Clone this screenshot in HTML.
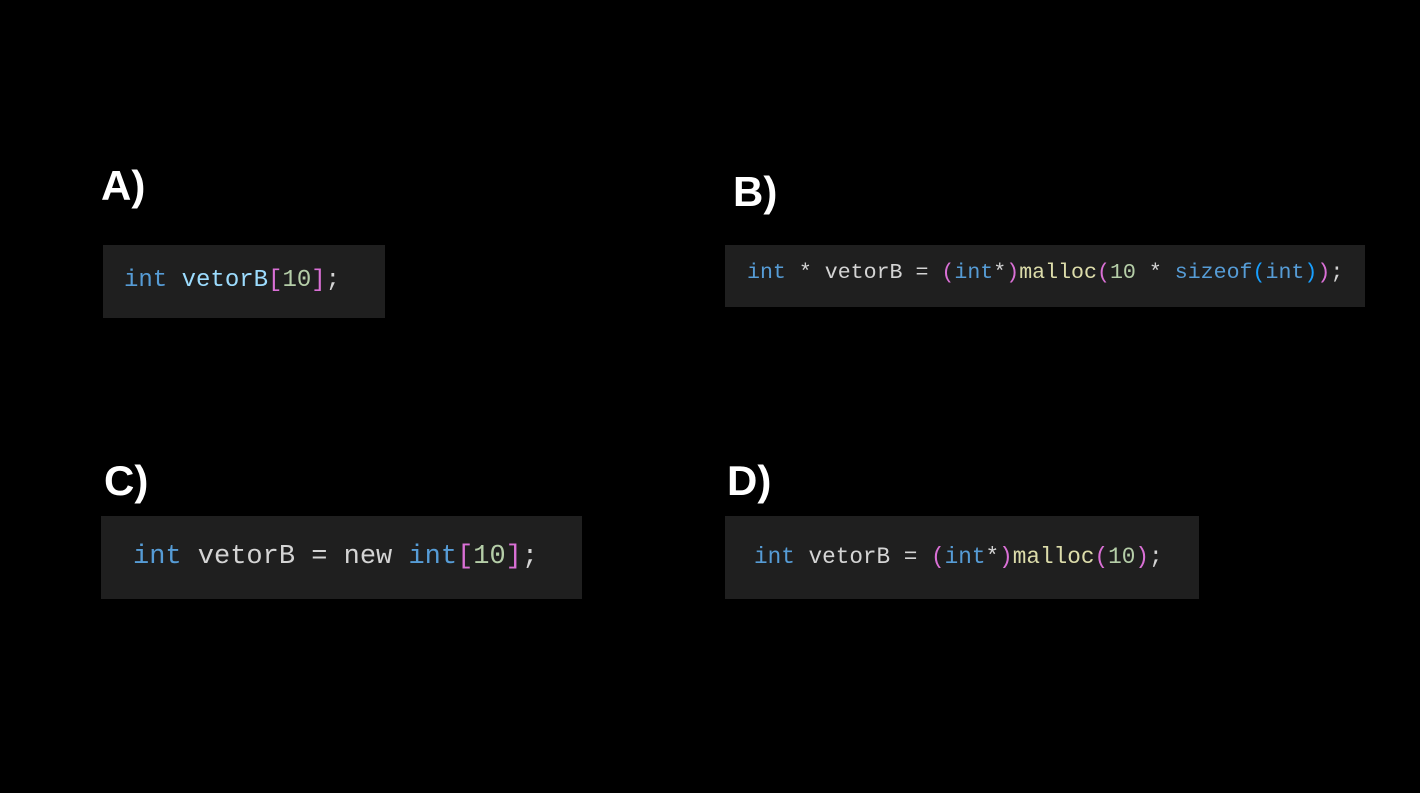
<!DOCTYPE html>
<html><head><meta charset="utf-8"><style>
html,body{margin:0;padding:0;background:#000;width:1420px;height:793px;overflow:hidden}
.l{position:absolute;color:#fff;font-family:"Liberation Sans",sans-serif;font-weight:bold;font-size:42px;line-height:1}
.b{position:absolute;background:#1f1f1f;font-family:"Liberation Mono",monospace;white-space:pre;box-sizing:border-box;color:#d4d4d4}
.k{color:#569cd6}.v{color:#9cdcfe}.p{color:#da70d6}.n{color:#b5cea8}.f{color:#dcdcaa}.q{color:#179fff}
</style></head><body>
<div class="l" style="left:101px;top:165px">A)</div>
<div class="l" style="left:733px;top:171px">B)</div>
<div class="l" style="left:104px;top:460px">C)</div>
<div class="l" style="left:727px;top:460px">D)</div>

<div class="b" style="left:103px;top:245px;width:282px;height:73px;line-height:71px;padding-left:21px;font-size:24px"><span class="k">int</span> <span class="v">vetorB</span><span class="p">[</span><span class="n">10</span><span class="p">]</span>;</div>

<div class="b" style="left:725px;top:245px;width:640px;height:62px;line-height:56px;padding-left:22px;font-size:21.6px"><span class="k">int</span> * vetorB = <span class="p">(</span><span class="k">int</span>*<span class="p">)</span><span class="f">malloc</span><span class="p">(</span><span class="n">10</span> * <span class="k">sizeof</span><span class="q">(</span><span class="k">int</span><span class="q">)</span><span class="p">)</span>;</div>

<div class="b" style="left:101px;top:516px;width:481px;height:83px;line-height:82px;padding-left:32px;font-size:27px"><span class="k">int</span> vetorB = new <span class="k">int</span><span class="p">[</span><span class="n">10</span><span class="p">]</span>;</div>

<div class="b" style="left:725px;top:516px;width:474px;height:83px;line-height:82px;padding-left:29px;font-size:22.7px"><span class="k">int</span> vetorB = <span class="p">(</span><span class="k">int</span>*<span class="p">)</span><span class="f">malloc</span><span class="p">(</span><span class="n">10</span><span class="p">)</span>;</div>
</body></html>
